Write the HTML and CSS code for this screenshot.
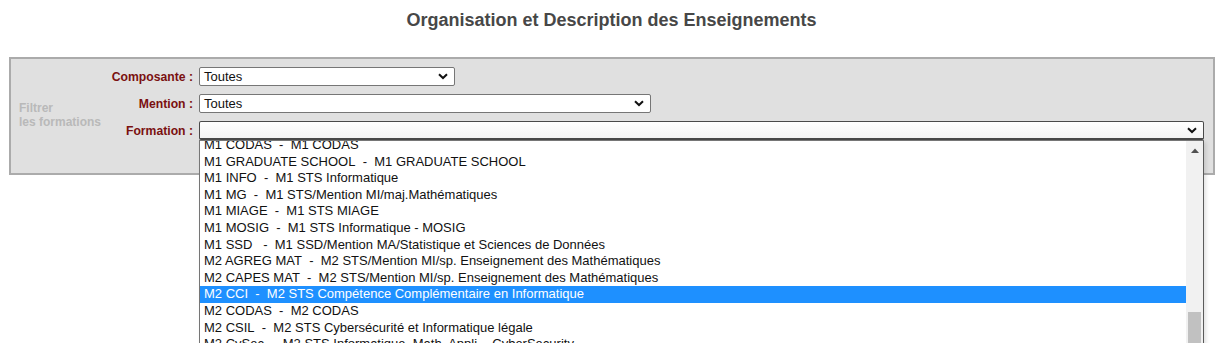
FILE: index.html
```html
<!DOCTYPE html>
<html lang="fr">

<head>
    <meta charset="UTF-8">
    <meta name="viewport" content="width=device-width, initial-scale=1.0">
    <title>Organisation et Description des Enseignements</title>
    <link rel="stylesheet" href="styles.css">
</head>

<body>
    <h2 class="page-title">Organisation et Description des Enseignements</h2>

    <div class="filter-panel">
        <div class="filter-hint">Filtrer<br>les formations</div>

        <div class="filter-grid">
            <label class="filter-label">Composante :</label>
            <div class="fake-select select-short">
                <span>Toutes</span>
                <svg class="chevron" width="10" height="7" viewBox="0 0 10 7"><path d="M1 1.2 L5 5 L9 1.2" fill="none" stroke="#111" stroke-width="2"/></svg>
            </div>

            <label class="filter-label">Mention :</label>
            <div class="fake-select select-medium">
                <span>Toutes</span>
                <svg class="chevron" width="10" height="7" viewBox="0 0 10 7"><path d="M1 1.2 L5 5 L9 1.2" fill="none" stroke="#111" stroke-width="2"/></svg>
            </div>

            <label class="filter-label">Formation :</label>
            <div class="select-wrap">
                <div class="fake-select select-long is-open">
                    <span></span>
                    <svg class="chevron" width="10" height="7" viewBox="0 0 10 7"><path d="M1 1.2 L5 5 L9 1.2" fill="none" stroke="#111" stroke-width="2"/></svg>
                </div>

                <!-- open dropdown list -->
                <div class="dropdown">
                    <ul class="options">
                        <li>M1 CODAS&nbsp; -&nbsp; M1 CODAS</li>
                        <li>M1 GRADUATE SCHOOL&nbsp; -&nbsp; M1 GRADUATE SCHOOL</li>
                        <li>M1 INFO&nbsp; -&nbsp; M1 STS Informatique</li>
                        <li>M1 MG&nbsp; -&nbsp; M1 STS/Mention MI/maj.Mathématiques</li>
                        <li>M1 MIAGE&nbsp; -&nbsp; M1 STS MIAGE</li>
                        <li>M1 MOSIG&nbsp; -&nbsp; M1 STS Informatique - MOSIG</li>
                        <li>M1 SSD&nbsp;&nbsp; -&nbsp; M1 SSD/Mention MA/Statistique et Sciences de Données</li>
                        <li>M2 AGREG MAT&nbsp; -&nbsp; M2 STS/Mention MI/sp. Enseignement des Mathématiques</li>
                        <li>M2 CAPES MAT&nbsp; -&nbsp; M2 STS/Mention MI/sp. Enseignement des Mathématiques</li>
                        <li class="selected">M2 CCI&nbsp; -&nbsp; M2 STS Compétence Complémentaire en Informatique</li>
                        <li>M2 CODAS&nbsp; -&nbsp; M2 CODAS</li>
                        <li>M2 CSIL&nbsp; -&nbsp; M2 STS Cybersécurité et Informatique légale</li>
                        <li>M2 CySec&nbsp; -&nbsp; M2 STS Informatique, Math. Appli. - CyberSecurity</li>
                    </ul>
                    <div class="scrollbar">
                        <svg class="scroll-up" width="8" height="5" viewBox="0 0 8 5"><path d="M0 5 L4 0.5 L8 5 Z" fill="#505050"/></svg>
                        <div class="scroll-thumb"></div>
                    </div>
                </div>
            </div>
        </div>
    </div>
</body>

</html>
```

FILE: styles.css
```css
body {
    margin: 0;
    font-family: "Liberation Sans", Arial, sans-serif;
    background-color: white;
    height: 343px;
    overflow: hidden;
}

.page-title {
    margin: 0;
    padding-top: 10px;
    padding-right: 9px;
    height: 57px;
    box-sizing: border-box;
    text-align: center;
    font-size: 18px;
    font-weight: bold;
    color: #474747;
}

.filter-panel {
    margin-left: 9px;
    width: 1206px;
    height: 118px;
    box-sizing: border-box;
    border: 2px solid #ababab;
    background-color: #e0e0e0;
    display: flex;
    align-items: flex-start;
    padding-top: 8px;
}

.filter-hint {
    width: 92px;
    padding-left: 8px;
    margin-top: 34px;
    font-size: 12px;
    font-weight: bold;
    line-height: 14px;
    color: #b9b9b9;
}

.filter-grid {
    display: grid;
    grid-template-columns: 82px auto;
    column-gap: 6px;
    row-gap: 8px;
    align-items: center;
}

.filter-label {
    text-align: right;
    font-size: 12.2px;
    font-weight: bold;
    color: #7a1010;
    white-space: nowrap;
}

.fake-select {
    height: 19px;
    box-sizing: border-box;
    border: 1px solid #767676;
    border-radius: 2px;
    background-color: white;
    display: flex;
    align-items: center;
    justify-content: space-between;
    padding: 0 6px 0 4px;
    font-size: 13px;
    color: #111;
}

.select-short {
    width: 256px;
}

.select-medium {
    width: 452px;
}

.select-long {
    width: 1005px;
}

.fake-select.is-open {
    border-color: #4a4a4a;
    border-bottom-width: 2px;
    background: linear-gradient(#ffffff, #f4f4f4);
}

.select-wrap {
    position: relative;
}

.dropdown {
    position: absolute;
    left: 0;
    top: 19px;
    width: 1005px;
    height: 220px;
    box-sizing: border-box;
    border: 1px solid #767676;
    border-right-color: #5a5a5a;
    background-color: white;
    overflow: hidden;
    z-index: 10;
    display: flex;
    box-shadow: 2px 2px 4px rgba(0, 0, 0, 0.12);
}

.options {
    list-style: none;
    margin: -4px 0 0 0;
    padding: 0;
    flex: 1;
    font-size: 13px;
    color: #111;
}

.options li {
    height: 16.6px;
    line-height: 16.6px;
    padding-left: 4px;
    white-space: nowrap;
}

.options li.selected {
    background-color: #1e90ff;
    color: white;
}

.scrollbar {
    width: 17px;
    background-color: #f1f1f1;
    position: relative;
    flex-shrink: 0;
}

.scroll-up {
    position: absolute;
    left: 5px;
    top: 7px;
}

.scroll-thumb {
    position: absolute;
    left: 2px;
    right: 2px;
    top: 171px;
    bottom: 0;
    background-color: #c1c1c1;
}
```
